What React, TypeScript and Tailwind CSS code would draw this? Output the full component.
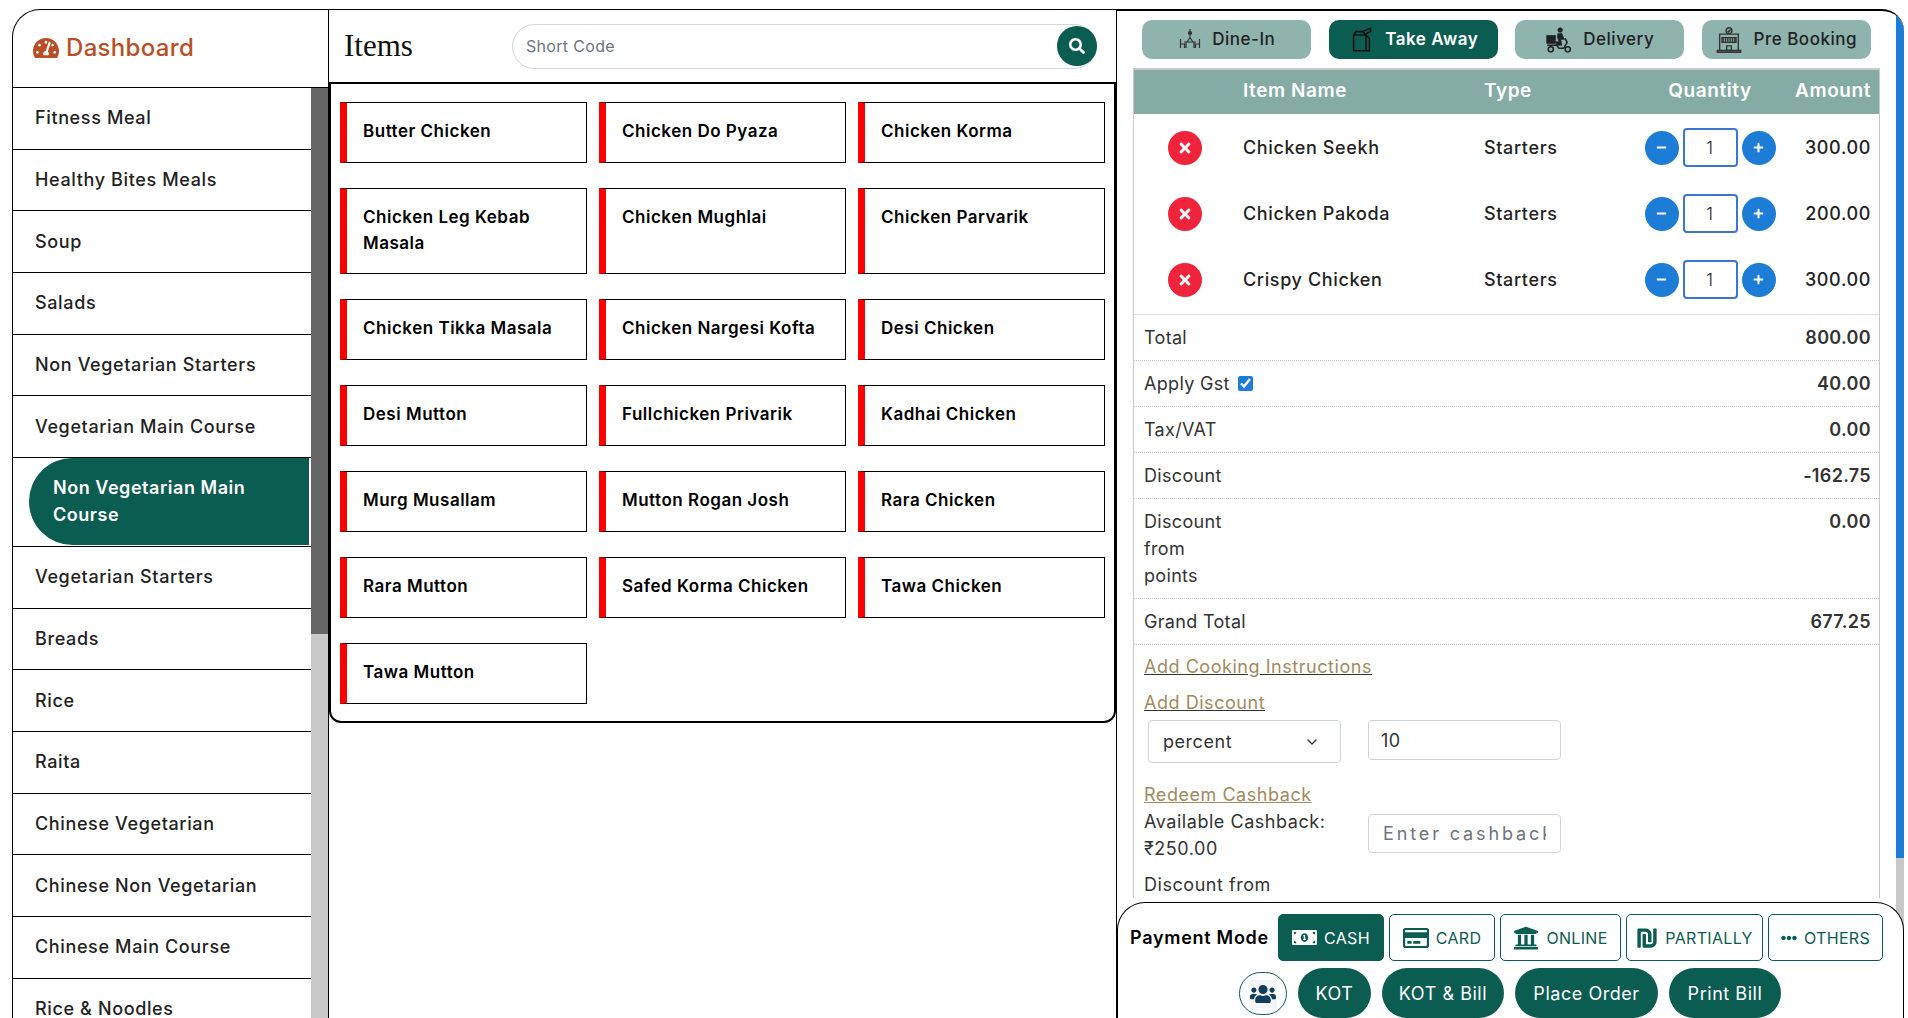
import { FaEllipsisH, FaMoneyBillAlt, FaMinus, FaPlus, FaRegCreditCard, FaSearch, FaShekelSign, FaTachometerAlt, FaTimes, FaUniversity, FaUsers } from 'react-icons/fa';
import { ChevronDown } from 'lucide-react';

const categories = [
  'Fitness Meal',
  'Healthy Bites Meals',
  'Soup',
  'Salads',
  'Non Vegetarian Starters',
  'Vegetarian Main Course',
  'Non Vegetarian Main Course',
  'Vegetarian Starters',
  'Breads',
  'Rice',
  'Raita',
  'Chinese Vegetarian',
  'Chinese Non Vegetarian',
  'Chinese Main Course',
  'Rice & Noodles',
];

const itemRows = [
  ['Butter Chicken', 'Chicken Do Pyaza', 'Chicken Korma'],
  ['Chicken Leg Kebab Masala', 'Chicken Mughlai', 'Chicken Parvarik'],
  ['Chicken Tikka Masala', 'Chicken Nargesi Kofta', 'Desi Chicken'],
  ['Desi Mutton', 'Fullchicken Privarik', 'Kadhai Chicken'],
  ['Murg Musallam', 'Mutton Rogan Josh', 'Rara Chicken'],
  ['Rara Mutton', 'Safed Korma Chicken', 'Tawa Chicken'],
  ['Tawa Mutton'],
];

const cartRows = [
  { name: 'Chicken Seekh', amount: '300.00' },
  { name: 'Chicken Pakoda', amount: '200.00' },
  { name: 'Crispy Chicken', amount: '300.00' },
];

function DineInIcon() {
  return (
    <svg viewBox="0 0 24 24" className="h-6 w-6" fill="none" stroke="#333" strokeWidth="1.2">
      <circle cx="12" cy="5" r="1.5" fill="#333" />
      <path d="M12 1v2.500M12 6.500v3M9 14l3-4.500 3 4.500M6 14h12M8 14v6M16 14v6M2.500 11v9M2.500 16h4v4M21.500 11v9M21.500 16h-4v4" />
    </svg>
  );
}

function TakeAwayIcon() {
  return (
    <svg viewBox="0 0 24 24" className="h-[27px] w-[27px]" fill="none" stroke="#111" strokeWidth="1.400">
      <path d="M5 8h11v14H5zM5 8l2-3h6l3 3M16 8l3 3v11h-3" />
      <path d="M13 5l7-3v3l-4 2" />
    </svg>
  );
}

function DeliveryIcon() {
  return (
    <svg viewBox="0 0 24 24" className="h-7 w-7" fill="#222222" stroke="#222222">
      <rect x="1.500" y="8" width="7.500" height="7" strokeWidth="0.500" />
      <circle cx="13" cy="3.500" r="2" strokeWidth="0.500" />
      <path d="M11 6.500h3.500l2 5h-3l1 5h-5v-3h2.500l-1.500-4z" strokeWidth="0.500" />
      <path d="M2 16.500h8l2 2.500h4l3-5-2-3.500" fill="none" strokeWidth="1.300" />
      <circle cx="5" cy="20" r="2.200" fill="none" strokeWidth="1.300" />
      <circle cx="19.500" cy="20" r="2.200" fill="none" strokeWidth="1.300" />
    </svg>
  );
}

function PreBookingIcon() {
  return (
    <svg viewBox="0 0 24 24" className="h-7 w-7" fill="none" stroke="#333" strokeWidth="1.200">
      <circle cx="12" cy="4" r="2.500" />
      <path d="M10.800 4l1 1 1.500-2" />
      <path d="M4 7h16v14H4zM2 21h20v1.500H2zM6 10h12v4H6z" />
      <path d="M7 10v4M9 10v4M11 10v4M13 10v4M15 10v4M17 10v4M10 17h4v4h-4z" />
    </svg>
  );
}

function OrderTypeButton({ label, icon, active }: { label: string; icon: React.ReactNode; active?: boolean }) {
  return (
    <button
      className={
        active
          ? 'flex h-[39px] w-[169px] items-center justify-center gap-[10px] rounded-[10px] bg-[#0b5c51] text-[17px] font-semibold tracking-[0.03em] text-white'
          : 'flex h-[39px] w-[169px] items-center justify-center gap-[10px] rounded-[10px] bg-[#8fb4ae] text-[17px] font-medium tracking-[0.03em] text-[#222222]'
      }
    >
      {icon}
      {label}
    </button>
  );
}

function PaymentButton({ label, icon, width, active }: { label: string; icon: React.ReactNode; width: string; active?: boolean }) {
  return (
    <button
      className={`flex h-[47px] items-center justify-center gap-[7px] rounded-[5px] border border-[#0b5c51] text-[16px] font-normal ${width} ${
        active ? 'bg-[#0b5c51] text-white' : 'bg-white text-[#0b5c51]'
      }`}
    >
      {icon}
      {label}
    </button>
  );
}

function ActionButton({ label, width }: { label: string; width: string }) {
  return (
    <button className={`h-[50px] rounded-full bg-[#0b5c51] text-[18px] font-normal tracking-[0.03em] text-white ${width}`}>{label}</button>
  );
}

function Sidebar() {
  return (
    <aside className="flex w-[316px] shrink-0 flex-col rounded-tl-[28px] border-l border-t border-black">
      <div className="flex h-[78px] shrink-0 items-center gap-[7px] border-b border-black pb-[2px] pl-[20px] text-[#b94f26]">
        <FaTachometerAlt className="h-[26px] w-[26px]" />
        <span className="text-[24px] font-medium">Dashboard</span>
      </div>
      <div className="flex min-h-0 flex-1">
        <ul className="w-[299px] overflow-hidden">
          {categories.map((name) =>
            name === 'Non Vegetarian Main Course' ? (
              <li key={name} className="flex h-[89px] items-stretch border-b border-black pb-[1px] pl-[16px] pr-[2px]">
                <div className="flex flex-1 items-center rounded-l-full bg-[#0b5c51] pl-6 pr-6 text-[18px] font-semibold leading-[27px] tracking-[0.03em] text-white">
                  {name}
                </div>
              </li>
            ) : (
              <li key={name} className="flex h-[61.67px] items-center border-b border-black pb-[1px] pl-[22px] text-[18px] font-medium tracking-[0.035em] text-[#222222]">
                {name}
              </li>
            ),
          )}
        </ul>
        <div className="w-[17px] bg-[#c8c8c8]">
          <div className="h-[546px] bg-[#666666]" />
        </div>
      </div>
    </aside>
  );
}

function ItemsColumn() {
  return (
    <main className="flex w-[788px] shrink-0 flex-col border-l border-t border-black">
      <div className="flex h-[72px] shrink-0 items-center pl-[15px] pr-[19px]">
        <h1 className="w-[168px] pt-[1px] font-['Liberation_Serif',serif] text-[31px] tracking-normal text-[#111111]">Items</h1>
        <div className="relative flex-1">
          <input
            readOnly
            placeholder="Short Code"
            className="h-[45px] w-full rounded-full border border-[#d0d5da] pl-[13px] text-[16px] outline-none placeholder:text-[#6c757d]"
          />
          <button className="absolute right-0 top-[2px] flex h-[40px] w-[40px] items-center justify-center rounded-full bg-[#0b5c51] text-white">
            <FaSearch className="h-[16px] w-[16px]" />
          </button>
        </div>
      </div>
      <div className="flex flex-col gap-[25px] rounded-b-[12px] border-2 border-black px-[9px] pb-[17px] pt-[18px]">
        {itemRows.map((row) => (
          <div key={row[0]} className="grid grid-cols-[247px_247px_247px] gap-x-[12px]">
            {row.map((name) => (
              <div
                key={name}
                className="min-h-[61px] border border-l-[7px] border-black border-l-[#ff0000] pb-[17px] pl-4 pr-3 pt-[15px] text-[17px] font-semibold leading-[26px] tracking-[0.03em] text-black"
              >
                {name}
              </div>
            ))}
          </div>
        ))}
      </div>
    </main>
  );
}

function SummaryRow({ label, value }: { label: React.ReactNode; value: string }) {
  return (
    <div className="flex h-[46px] items-center justify-between border-b border-dotted border-[#c4c4c4] pl-[10px] pr-[8px] text-[18px] text-[#333333]">
      <div>{label}</div>
      <div className="font-semibold">{value}</div>
    </div>
  );
}

function CartColumn() {
  return (
    <section className="relative flex min-w-0 flex-1 overflow-hidden rounded-tr-[22px] border-l border-t-2 border-black">
      <div className="w-[779px] shrink-0 pt-[9px]">
        <div className="flex justify-center gap-[17.500px]">
          <OrderTypeButton label="Dine-In" icon={<DineInIcon />} />
          <OrderTypeButton label="Take Away" icon={<TakeAwayIcon />} active />
          <OrderTypeButton label="Delivery" icon={<DeliveryIcon />} />
          <OrderTypeButton label="Pre Booking" icon={<PreBookingIcon />} />
        </div>

        <div className="ml-4 mt-[9px] w-[747px] border-x border-[#c8c8c8]">
          <div className="grid h-[46px] grid-cols-[109px_241px_159px_134px_1fr] items-center border-t-2 border-[#c8c8c8] bg-[#84aca5] pb-[2px] text-[19px] font-semibold tracking-[0.03em] text-white">
            <div />
            <div>Item Name</div>
            <div>Type</div>
            <div className="text-center">Quantity</div>
            <div className="pr-[8px] text-right">Amount</div>
          </div>
          {cartRows.map((row) => (
            <div key={row.name} className="grid h-[66px] grid-cols-[109px_241px_159px_134px_1fr] items-center pt-[1px] text-[18px] font-medium tracking-[0.035em] text-[#222222]">
              <div className="flex justify-center pr-[8px]">
                <button className="flex h-[34px] w-[34px] items-center justify-center rounded-full bg-[#ef233c] text-white">
                  <FaTimes className="h-[16px] w-[16px]" />
                </button>
              </div>
              <div>{row.name}</div>
              <div>Starters</div>
              <div className="flex items-center justify-center gap-[4px]">
                <button className="flex h-[34px] w-[34px] items-center justify-center rounded-full bg-[#1c7cd6] text-white">
                  <FaMinus className="h-[11px] w-[11px]" />
                </button>
                <div className="flex h-[39px] w-[55px] items-center justify-center rounded-[4px] border-2 border-[#3b76d4] pt-[2px] text-[17px] font-light">1</div>
                <button className="flex h-[34px] w-[34px] items-center justify-center rounded-full bg-[#1c7cd6] text-white">
                  <FaPlus className="h-[11px] w-[11px]" />
                </button>
              </div>
              <div className="pr-[8px] text-right">{row.amount}</div>
            </div>
          ))}

          <div className="mt-[2px] border-t border-[#dddddd]">
            <SummaryRow label="Total" value="800.00" />
            <SummaryRow
              label={
                <span className="flex items-center gap-2">
                  Apply Gst
                  <input type="checkbox" defaultChecked readOnly className="h-[15px] w-[15px] accent-[#1c7cd6]" />
                </span>
              }
              value="40.00"
            />
            <SummaryRow label="Tax/VAT" value="0.00" />
            <SummaryRow label="Discount" value="-162.75" />
            <div className="flex h-[100px] justify-between border-b border-dotted border-[#c4c4c4] pl-[10px] pr-[8px] pt-[9px] text-[18px] leading-[27px] text-[#333333]">
              <div className="w-[90px]">Discount from points</div>
              <div className="font-semibold">0.00</div>
            </div>
            <SummaryRow label="Grand Total" value="677.25" />
          </div>

          <div className="px-[10px] pt-[8px] text-[18px] leading-[27px] tracking-[0.03em] text-[#333333]">
            <a className="block text-[#a08a5e] underline decoration-[#333333]">Add Cooking Instructions</a>
            <a className="mt-[9px] block text-[#a08a5e] underline decoration-[#333333]">Add Discount</a>
            <div className="mt-[4px] flex items-start gap-[27px] pl-[4px]">
              <div className="flex h-[43px] w-[193px] items-center justify-between rounded-[4px] border border-[#ced4da] pl-[14px] pr-[20px]">
                percent
                <ChevronDown className="h-4 w-4 text-[#333333]" />
              </div>
              <input readOnly value="10" className="h-[40px] w-[193px] rounded-[4px] border border-[#ced4da] pl-[12px] outline-none" />
            </div>
            <a className="mt-[18px] block text-[#a08a5e] underline decoration-[#a08a5e]">Redeem Cashback</a>
            <div className="flex items-start">
              <div className="w-[224px]">
                Available Cashback:
                <br />₹250.00
              </div>
              <input
                readOnly
                placeholder="Enter cashback"
                className="mt-[6px] h-[39px] w-[193px] rounded-[4px] border border-[#ced4da] px-[14px] tracking-[0.16em] outline-none placeholder:text-[#6c757d]"
              />
            </div>
            <div className="mt-[9px]">Discount from</div>
          </div>
        </div>
      </div>

      <div className="w-2 shrink-0 bg-[#c8c8c8]">
        <div className="h-[847px] bg-[#1c7cd6]" />
      </div>

      <div className="absolute inset-x-0 bottom-0 h-[116px] rounded-t-[28px] border border-b-0 border-black bg-white">
        <div className="flex items-center pl-[12px] pt-[11px]">
          <span className="w-[148px] text-[18px] font-semibold tracking-[0.04em] text-black">Payment Mode</span>
          <div className="flex gap-[5px]">
            <PaymentButton label="CASH" width="w-[106px]" active icon={<FaMoneyBillAlt className="h-[25px] w-[25px]" />} />
            <PaymentButton label="CARD" width="w-[106px]" icon={<FaRegCreditCard className="h-[26px] w-[26px]" />} />
            <PaymentButton label="ONLINE" width="w-[121px]" icon={<FaUniversity className="h-[26px] w-[26px]" />} />
            <PaymentButton label="PARTIALLY" width="w-[137px]" icon={<FaShekelSign className="h-[22px] w-[22px]" />} />
            <PaymentButton label="OTHERS" width="w-[115px]" icon={<FaEllipsisH className="h-[16px] w-[16px]" />} />
          </div>
        </div>
        <div className="mt-[7px] flex items-start gap-[11px] pl-[121px]">
          <button className="mt-[4px] flex h-[43px] w-[48px] items-center justify-center rounded-full border border-[#0b5c51] bg-white">
            <span className="flex h-[28px] w-[28px] items-center justify-center bg-[#f3f5f6]">
              <FaUsers className="h-[26px] w-[26px] text-[#123e5c]" />
            </span>
          </button>
          <ActionButton label="KOT" width="w-[73px]" />
          <ActionButton label="KOT & Bill" width="w-[122px]" />
          <ActionButton label="Place Order" width="w-[143px]" />
          <ActionButton label="Print Bill" width="w-[112px]" />
        </div>
      </div>
    </section>
  );
}

export default function App() {
  return (
    <div className="flex h-[1018px] w-full overflow-hidden bg-white pl-3 pr-1 pt-[9px] font-['Inter',sans-serif] tracking-[0.02em]">
      <Sidebar />
      <ItemsColumn />
      <CartColumn />
    </div>
  );
}
